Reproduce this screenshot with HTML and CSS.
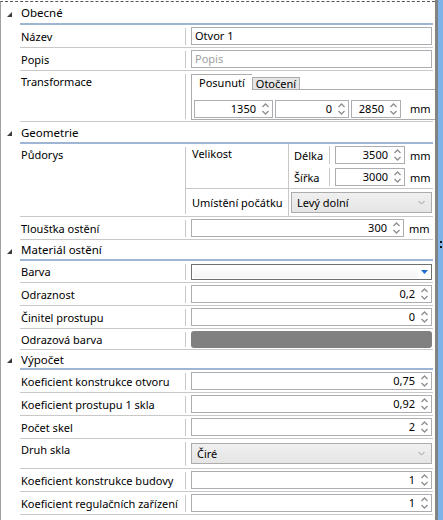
FILE: index.html
```html
<!DOCTYPE html>
<html>
<head>
<meta charset="utf-8">
<link rel="stylesheet" href="styles.css">
</head>
<body>
<div class="window">
  <div class="grid">
    <div class="sec-head h-obecne"><span class="tri"></span><span class="sec-title">Obecné</span></div>
    <div class="row r22"><div class="lab">Název</div><div class="div"></div><div class="val"><div class="tb">Otvor 1</div></div></div>
    <div class="row r22"><div class="lab">Popis</div><div class="div"></div><div class="val"><div class="tb ph">Popis</div></div></div>
    <div class="row r50"><div class="lab top">Transformace</div><div class="div"></div>
      <div class="val vtop">
        <div class="tabs">
          <div class="tabstrip"><div class="tab sel">Posunutí</div><div class="tab">Otočení</div></div>
          <div class="tabpanel">
            <div class="spin w79"><span class="num">1350</span><span class="arr"><svg width="7" height="14" viewBox="0 0 7 14"><path d="M0.5 5 L3.5 2 L6.5 5" /><path d="M0.5 9 L3.5 12 L6.5 9" /></svg></span></div>
            <div class="spin w74"><span class="num">0</span><span class="arr"><svg width="7" height="14" viewBox="0 0 7 14"><path d="M0.5 5 L3.5 2 L6.5 5" /><path d="M0.5 9 L3.5 12 L6.5 9" /></svg></span></div>
            <div class="spin w50"><span class="num">2850</span><span class="arr"><svg width="7" height="14" viewBox="0 0 7 14"><path d="M0.5 5 L3.5 2 L6.5 5" /><path d="M0.5 9 L3.5 12 L6.5 9" /></svg></span></div>
            <span class="unit">mm</span>
          </div>
        </div>
      </div>
    </div>

    <div class="sec-head h-geo"><span class="tri"></span><span class="sec-title">Geometrie</span></div>
    <div class="row r72"><div class="lab top">Půdorys</div><div class="div"></div>
      <div class="val sub">
        <div class="subrow s44">
          <div class="sublab">Velikost</div><div class="div"></div>
          <div class="subright">
            <div class="dimrow"><span class="dimlab">Délka</span><span class="div sm"></span><div class="spin w70"><span class="num">3500</span><span class="arr"><svg width="7" height="14" viewBox="0 0 7 14"><path d="M0.5 5 L3.5 2 L6.5 5" /><path d="M0.5 9 L3.5 12 L6.5 9" /></svg></span></div><span class="unit">mm</span></div>
            <div class="dimrow"><span class="dimlab">Šířka</span><span class="div sm"></span><div class="spin w70"><span class="num">3000</span><span class="arr"><svg width="7" height="14" viewBox="0 0 7 14"><path d="M0.5 5 L3.5 2 L6.5 5" /><path d="M0.5 9 L3.5 12 L6.5 9" /></svg></span></div><span class="unit">mm</span></div>
          </div>
        </div>
        <div class="subrow s27">
          <div class="sublab mid">Umístění počátku</div><div class="div"></div>
          <div class="subright2"><div class="combo c21"><span>Levý dolní</span><svg class="chev" width="7" height="5" viewBox="0 0 7 5"><path d="M0.5 1 L3.5 4 L6.5 1"/></svg></div></div>
        </div>
      </div>
    </div>
    <div class="row r22"><div class="lab">Tloušťka ostění</div><div class="div"></div><div class="val"><div class="spin grow"><span class="num">300</span><span class="arr"><svg width="7" height="14" viewBox="0 0 7 14"><path d="M0.5 5 L3.5 2 L6.5 5" /><path d="M0.5 9 L3.5 12 L6.5 9" /></svg></span></div><span class="unit">mm</span></div></div>

    <div class="sec-head h-mat"><span class="tri"></span><span class="sec-title">Materiál ostění</span></div>
    <div class="row r21"><div class="lab">Barva</div><div class="div"></div><div class="val"><div class="colorcombo"><span class="inner"></span><svg class="bluearr" width="7" height="4" viewBox="0 0 7 4"><path d="M0 0 H7 L3.5 4 Z"/></svg></div></div></div>
    <div class="row r22"><div class="lab">Odraznost</div><div class="div"></div><div class="val"><div class="spin full"><span class="num">0,2</span><span class="arr"><svg width="7" height="14" viewBox="0 0 7 14"><path d="M0.5 5 L3.5 2 L6.5 5" /><path d="M0.5 9 L3.5 12 L6.5 9" /></svg></span></div></div></div>
    <div class="row r22"><div class="lab">Činitel prostupu</div><div class="div"></div><div class="val"><div class="spin full"><span class="num">0</span><span class="arr"><svg width="7" height="14" viewBox="0 0 7 14"><path d="M0.5 5 L3.5 2 L6.5 5" /><path d="M0.5 9 L3.5 12 L6.5 9" /></svg></span></div></div></div>
    <div class="row r20"><div class="lab">Odrazová barva</div><div class="div"></div><div class="val"><div class="swatch"></div></div></div>

    <div class="sec-head h-vyp"><span class="tri"></span><span class="sec-title">Výpočet</span></div>
    <div class="row r22"><div class="lab">Koeficient konstrukce otvoru</div><div class="div"></div><div class="val"><div class="spin full"><span class="num">0,75</span><span class="arr"><svg width="7" height="14" viewBox="0 0 7 14"><path d="M0.5 5 L3.5 2 L6.5 5" /><path d="M0.5 9 L3.5 12 L6.5 9" /></svg></span></div></div></div>
    <div class="row r22"><div class="lab">Koeficient prostupu 1 skla</div><div class="div"></div><div class="val"><div class="spin full"><span class="num">0,92</span><span class="arr"><svg width="7" height="14" viewBox="0 0 7 14"><path d="M0.5 5 L3.5 2 L6.5 5" /><path d="M0.5 9 L3.5 12 L6.5 9" /></svg></span></div></div></div>
    <div class="row r22"><div class="lab">Počet skel</div><div class="div"></div><div class="val"><div class="spin full"><span class="num">2</span><span class="arr"><svg width="7" height="14" viewBox="0 0 7 14"><path d="M0.5 5 L3.5 2 L6.5 5" /><path d="M0.5 9 L3.5 12 L6.5 9" /></svg></span></div></div></div>
    <div class="row r29"><div class="lab top">Druh skla</div><div class="div"></div><div class="val"><div class="combo full c21"><span>Čiré</span><svg class="chev" width="7" height="5" viewBox="0 0 7 5"><path d="M0.5 1 L3.5 4 L6.5 1"/></svg></div></div></div>
    <div class="row r22"><div class="lab">Koeficient konstrukce budovy</div><div class="div"></div><div class="val"><div class="spin full"><span class="num">1</span><span class="arr"><svg width="7" height="14" viewBox="0 0 7 14"><path d="M0.5 5 L3.5 2 L6.5 5" /><path d="M0.5 9 L3.5 12 L6.5 9" /></svg></span></div></div></div>
    <div class="row r22"><div class="lab">Koeficient regulačních zařízení</div><div class="div"></div><div class="val"><div class="spin full"><span class="num">1</span><span class="arr"><svg width="7" height="14" viewBox="0 0 7 14"><path d="M0.5 5 L3.5 2 L6.5 5" /><path d="M0.5 9 L3.5 12 L6.5 9" /></svg></span></div></div></div>
  </div>
  <div class="vbar"></div>
  <div class="edge"><div class="grip"><span></span><span></span></div></div>
</div>
</body>
</html>
```

FILE: styles.css
```css
* { box-sizing: border-box; }
html, body { margin: 0; padding: 0; background: #fff; }
body {
  width: 443px; height: 520px; overflow: hidden;
  font-family: "Noto Sans", "Open Sans", sans-serif;
  font-size: 11px; color: #000;
}
.window { display: flex; height: 520px; }
.grid {
  width: 435px; height: 519px; margin-top: 1px; flex-shrink: 0;
  border-top: 1px dashed #555;
  border-left: 1px solid #a0a0a0;
  padding: 0 2px 0 19px;
}
.vbar { width: 3px; background: #828282; flex-shrink: 0; }
.edge { width: 5px; background: #7cb4ea; position: relative; }
.grip {
  position: absolute; left: 2px; top: 241px;
  display: flex; flex-direction: column; gap: 3px;
}
.grip span { width: 2px; height: 2px; background: #111; }

.sec-head {
  display: flex; align-items: center;
  margin-left: -19px; padding-left: 6px;
  font-size: 11.5px;
}
.h-obecne { height: 23px; }
.h-geo { height: 22px; }
.h-mat { height: 21px; }
.h-vyp { height: 20px; }
.sec-head .sec-title {
  flex: 1; height: 100%; display: flex; align-items: center;
  border-bottom: 2px solid #9eb6d4; margin-left: 8px; padding-left: 1px;
}
.tri {
  width: 0; height: 0;
  border-left: 5px solid transparent;
  border-bottom: 5px solid #3c3c3c;
  margin-top: 1px;
}

.row { display: flex; border-bottom: 1px solid #c8c8c8; }
.r20 { height: 21px; }
.r21 { height: 22px; }
.r22 { height: 23px; }
.r29 { height: 30px; }
.r50 { height: 51px; }
.r72 { height: 73px; }
.lab {
  width: 165px; flex-shrink: 0; display: flex; align-items: center; padding-left: 1px;
  white-space: nowrap;
}
.lab.top { align-items: flex-start; padding-top: 3px; }
.div { width: 1px; flex-shrink: 0; background: #c8c8c8; margin: 3px 0 2px; }
.val {
  flex: 1; min-width: 0; display: flex; align-items: center; padding: 0 1px 0 5px;
}
.val.vtop { align-items: flex-start; padding-top: 2px; }
.tb {
  flex: 1; height: 18px; border: 1px solid #abadb3;
  padding-left: 3px; line-height: 16px;
}
.tb.ph { color: #a0a0a0; }

.tabs { flex: 1; display: flex; flex-direction: column; }
.tabstrip { display: flex; align-items: flex-end; height: 16px; }
.tab {
  height: 12px; line-height: 11px; border: 1px solid #acacac; border-bottom: none;
  background: #e6e6e6; padding: 0 3px;
}
.tab.sel {
  height: 16px; line-height: 15px; background: #fff; padding: 0 7px;
  position: relative; top: 1px; border-right: none;
}
.tabpanel {
  height: 31px; border: 1px solid #acacac;
  display: flex; align-items: center; padding: 8px 2px 0; gap: 2px;
}
.spin {
  height: 18px; border: 1px solid #abadb3; display: flex; align-items: center;
  justify-content: flex-end; padding-right: 3px; flex-shrink: 0;
}
.spin .num { line-height: 16px; padding-right: 6px; }
.spin .arr { display: flex; }
.spin svg path { fill: none; stroke: #8e8e8e; stroke-width: 1.3; }
.w79 { width: 79px; }
.w74 { width: 74px; }
.w50 { width: 50px; }
.w70 { width: 70px; }
.grow, .full { flex: 1 1 auto; }
.unit { margin-left: 5px; margin-right: 6px; width: 17px; flex-shrink: 0; }
.tabpanel .unit { margin-left: 7px; }

.val.sub { flex-direction: column; align-items: stretch; padding: 0; }
.subrow { display: flex; }
.s44 { height: 45px; border-bottom: 1px solid #c8c8c8; }
.s27 { flex: 1; }
.sublab { width: 102px; flex-shrink: 0; padding: 2px 0 0 6px; white-space: nowrap; }
.sublab.mid { display: flex; align-items: center; padding-top: 0; }
.subrow .div { margin: 0; }
.subright { flex: 1; display: flex; flex-direction: column; padding-left: 5px; }
.dimrow { height: 22px; display: flex; align-items: center; }
.dimlab { width: 35px; flex-shrink: 0; }
.div.sm { align-self: stretch; margin: 2px 5px 2px 0; }
.subright2 { flex: 1; display: flex; align-items: center; padding: 0 1px 0 2px; }
.combo {
  flex: 1; height: 21px; border: 1px solid #acacac;
  background: linear-gradient(#f0f0f0, #e5e5e5);
  display: flex; align-items: center; justify-content: space-between;
  padding: 0 6px 0 5px;
}
.combo .chev path { fill: none; stroke: #9a9a9a; stroke-width: 1; }
.colorcombo {
  flex: 1; height: 16px; border: 1px solid #707070; display: flex; align-items: center;
  padding: 1px 3px 1px 1px; background: #fff;
}
.colorcombo .inner { flex: 1; height: 100%; background: linear-gradient(#fff, #f4f4f4); margin-right: 3px; border-radius: 2px; }
.bluearr path { fill: #1f6fd0; }
.swatch { flex: 1; height: 17px; background: #808080; border-radius: 3px; }
```
